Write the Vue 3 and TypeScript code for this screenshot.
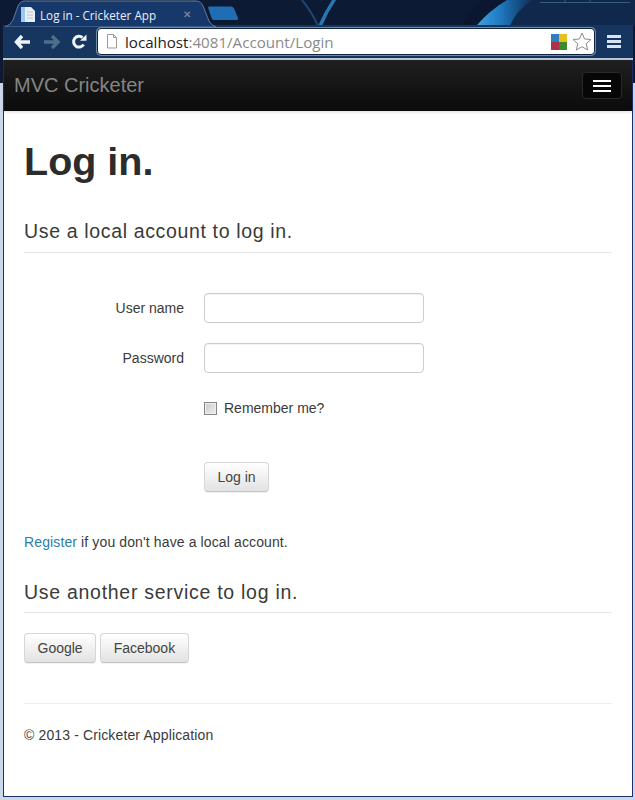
<script setup lang="ts">
const tabTitle: string = 'Log in - Cricketer App'
</script>

<template>
  <div class="window">
    <svg class="wallpaper" width="635" height="26" viewBox="0 0 635 26" aria-hidden="true">
      <defs>
        <linearGradient id="glow" x1="0" y1="0" x2="1" y2="0">
          <stop offset="0" stop-color="#3fa3e0" />
          <stop offset=".45" stop-color="#1e78bd" />
          <stop offset="1" stop-color="#0f2c57" />
        </linearGradient>
      </defs>
      <path d="M520 0 H635 V26 H500 Z" fill="#11284d" />
      <path d="M476 26 Q490 10 507 0 H532 Q515 12 510 26 Z" fill="url(#glow)" />
      <path d="M460 26 Q472 10 482 0 H506 Q488 10 476 26 Z" fill="#0b1730" />
      <path d="M322 26 Q328 12 336 0 L332 0 Q324 12 318 26 Z" fill="#2a76b3" />
      <path d="M302 0 Q312 12 318 26" stroke="#1b4675" stroke-width="2" fill="none" />
      <path d="M540 2.5 H630 M565 0 V2.5 M590 0 V2.5" stroke="#3a5a82" stroke-width="1" fill="none" />
    </svg>
    <div class="tabstrip">
      <div class="tab">
        <svg class="tab-shape" width="216" height="27" viewBox="0 0 216 27" aria-hidden="true">
          <path d="M0 27 Q6 25 8 20 L13 6 Q15 1 20 1 H191 Q196 1 198 6 L204 21 Q206 25 211 27 Z" fill="#17386a" stroke="#5f7b9d" />
        </svg>
        <svg class="tab-icon" width="16" height="17" viewBox="0 0 16 17" aria-hidden="true">
          <path d="M1 1 H11 L15 5 V16 H1 Z" fill="#e8eef5" />
          <path d="M1 1 H5 V16 H1 Z" fill="#9cc8ea" />
          <path d="M7 6 H13 M7 9 H13 M7 12 H13" stroke="#c2c6cc" />
        </svg>
        <span class="tab-title">{{ tabTitle }}</span>
        <span class="tab-close">✕</span>
      </div>
      <svg class="new-tab" width="32" height="15" viewBox="0 0 32 15" aria-hidden="true">
        <path d="M1 1.5 Q1 .5 3 .5 H24 Q26 .5 27 2.5 L31 12 Q31.500 14 29 14 H7 Q5 14 4.500 12 Z" fill="#1f6db5" />
      </svg>
    </div>
    <div class="toolbar">
      <svg class="tool" width="17" height="16" viewBox="0 0 17 16" aria-hidden="true">
        <path d="M8 2 L2.500 8 L8 14 M3 8 H16" stroke="#eef3f8" stroke-width="3.4" fill="none" />
      </svg>
      <svg class="tool" width="18" height="16" viewBox="0 0 18 16" aria-hidden="true">
        <path d="M10 2 L16 8 L10 14 M15 8 H2" stroke="#4d6e8c" stroke-width="3.4" fill="none" />
      </svg>
      <svg class="tool" width="16" height="16" viewBox="0 0 16 16" aria-hidden="true">
        <path d="M12.600 10.500 A5.400 5.400 0 1 1 11.500 3.600" stroke="#eef3f8" stroke-width="3" fill="none" />
        <path d="M9 6.800 H15.500 V.500 Z" fill="#eef3f8" />
      </svg>
      <div class="omnibox">
        <svg width="12" height="15" viewBox="0 0 12 15" aria-hidden="true">
          <path d="M1.500 .5 H7.500 L10.500 3.500 V14 H1.500 Z M7.500 .5 V3.500 H10.500" fill="#fff" stroke="#9a9a9a" />
        </svg>
        <span class="url"><span class="host">localhost</span>:4081/Account/Login</span>
        <span class="omni-right">
          <span class="ext">
            <i class="c1"></i><i class="c2"></i><i class="c3"></i><i class="c4"></i>
          </span>
          <svg width="20" height="19" viewBox="0 0 20 19" aria-hidden="true">
            <path d="M10 1 L12.600 7 L19 7.500 L14.200 11.700 L15.700 18 L10 14.700 L4.300 18 L5.800 11.700 L1 7.500 L7.400 7 Z" fill="#fff" stroke="#8a8a8a" />
          </svg>
        </span>
      </div>
      <span class="chrome-menu"><i></i><i></i><i></i></span>
    </div>
    <div class="page">
      <nav class="navbar">
        <span class="brand">MVC Cricketer</span>
        <span class="toggle"><i></i><i></i><i></i></span>
      </nav>
      <main class="content">
        <h1>Log in.</h1>
        <h2 class="section first">Use a local account to log in.</h2>
        <form class="form" @submit.prevent>
          <div class="row">
            <label class="label" for="user">User name</label>
            <input id="user" class="input" type="text" />
          </div>
          <div class="row">
            <label class="label" for="pass">Password</label>
            <input id="pass" class="input" type="password" />
          </div>
          <div class="row check-row">
            <label class="check">
              <span class="box"></span>
              <span>Remember me?</span>
            </label>
          </div>
          <div class="row submit-row">
            <button class="btn" type="submit">Log in</button>
          </div>
        </form>
        <p class="register"><a href="#" class="link">Register</a> if you don't have a local account.</p>
        <h2 class="section second">Use another service to log in.</h2>
        <div class="providers">
          <button class="btn provider" type="button">Google</button>
          <button class="btn provider" type="button">Facebook</button>
        </div>
        <footer class="footer">© 2013 - Cricketer Application</footer>
      </main>
    </div>
  </div>
</template>

<style>
html, body { margin: 0; background: #c6d6e8; }
</style>

<style scoped>
.window {
  position: relative;
  width: 635px;
  height: 800px;
  box-sizing: border-box;
  padding: 0 2px 3px 3px;
  overflow: hidden;
  background: linear-gradient(#0d1a33 0, #0d1a33 83px, #c9d8ea 83px);
  font-family: "Liberation Sans", Arial, sans-serif;
  display: flex;
  flex-direction: column;
}
.wallpaper { position: absolute; left: 0; top: 0; }
.tabstrip {
  position: relative;
  height: 25px;
  display: flex;
  align-items: flex-start;
  flex: none;
  z-index: 1;
}
.tab {
  position: relative;
  width: 204px;
  height: 25px;
  box-sizing: border-box;
  padding: 4px 0 0 17px;
  display: flex;
  align-items: center;
  align-self: flex-start;
  gap: 4px;
}
.tab-shape { position: absolute; left: 2px; top: 0; }
.tab-icon, .tab-title, .tab-close { position: relative; }
.tab-title {
  flex: 1;
  color: #e9eff6;
  font: 11.7px "Open Sans", "Liberation Sans", sans-serif;
  white-space: nowrap;
}
.tab-close { color: #6f8098; font-size: 10px; font-weight: 700; margin-right: 16px; }
.new-tab { margin: 6px 0 0 0; }
.toolbar {
  position: relative;
  height: 35px;
  box-sizing: border-box;
  flex: none;
  display: flex;
  align-items: center;
  padding: 0 0 0 11px;
  background: #16355f;
  border-bottom: 2px solid #b9c6d6;
}
.tool { flex: none; margin-right: 11px; }
.omnibox {
  flex: none;
  width: 498px;
  height: 27px;
  margin-left: -1px;
  box-sizing: border-box;
  display: flex;
  align-items: center;
  gap: 7px;
  padding: 0 0 0 8px;
  background: #fff;
  border: 1px solid #0d2340;
  border-radius: 4px;
  box-shadow: 0 0 0 1px #6f8cab;
}
.url { color: #8a8a8a; font: 15.15px "Open Sans", "Liberation Sans", sans-serif; white-space: nowrap; }
.host { color: #222; }
.omni-right { margin-left: auto; display: flex; align-items: center; gap: 5px; padding-right: 2px; }
.ext { width: 16px; height: 16px; display: grid; grid-template-columns: 1fr 1fr; grid-template-rows: 1fr 1fr; }
.ext i { display: block; }
.c1 { background: #2f7fc0; }
.c2 { background: #e6c01c; }
.c3 { background: #b0304c; }
.c4 { background: #3c8a2c; }
.chrome-menu { display: flex; flex-direction: column; gap: 2px; margin-left: 12px; }
.chrome-menu i { display: block; width: 14px; height: 3px; background: #d8e4f2; }
.page {
  flex: 1;
  min-height: 0;
  width: 630px;
  box-sizing: border-box;
  background: #fff;
  border-left: 1px solid #1c2f66;
  border-right: 1px solid #1c2f66;
  border-bottom: 1px solid #1c2f66;
  display: flex;
  flex-direction: column;
}
.navbar {
  height: 51px;
  flex: none;
  box-sizing: border-box;
  display: flex;
  align-items: center;
  justify-content: space-between;
  padding: 0 10px;
  background: linear-gradient(#1f1f1f, #0b0b0b);
  box-shadow: 0 1px 3px rgba(0, 0, 0, .15);
}
.brand { color: #858585; font-size: 20px; }
.toggle {
  width: 40px;
  height: 27px;
  box-sizing: border-box;
  display: flex;
  flex-direction: column;
  justify-content: center;
  align-items: center;
  gap: 3px;
  background: #070707;
  border: 1px solid #2a2a2a;
  border-radius: 4px;
}
.toggle i { display: block; width: 18px; height: 2px; background: #fff; }
.content {
  flex: 1;
  padding: 0 20px;
  color: #3a3a3a;
  font-size: 14px;
  line-height: 20px;
}
h1 {
  margin: 29px 0 0;
  font-size: 39.5px;
  line-height: 42px;
  font-weight: 700;
  color: #2c2c2c;
}
.section {
  margin: 0;
  padding-bottom: 9px;
  border-bottom: 1px solid #e6e6e6;
  font-size: 19.5px;
  letter-spacing: .65px;
  line-height: 22px;
  font-weight: 400;
}
.section.first { margin-top: 38px; padding-bottom: 10px; }
.section.second { margin-top: 29px; letter-spacing: .72px; }
.form { margin-top: 40px; }
.row {
  display: flex;
  align-items: center;
  gap: 20px;
  height: 30px;
  margin-bottom: 20px;
  padding-left: 180px;
}
.row .label { margin-left: -180px; width: 160px; text-align: right; }
.input {
  width: 220px;
  height: 30px;
  box-sizing: border-box;
  border: 1px solid #ccc;
  border-radius: 4px;
  background: #fff;
  box-shadow: inset 0 1px 1px rgba(0, 0, 0, .05);
}
.check { display: flex; align-items: center; gap: 7px; }
.box {
  width: 13px;
  height: 13px;
  box-sizing: border-box;
  border: 1px solid #858585;
  background: linear-gradient(135deg, #c8c8c8, #eeeeee);
  box-shadow: inset 0 0 0 1px #f0f0f0;
}
.submit-row { margin: 0; }
.check-row { margin-bottom: 39px; }
.btn {
  height: 30px;
  box-sizing: border-box;
  padding: 0 12.5px;
  color: #444;
  font: 14px "Liberation Sans", Arial, sans-serif;
  background: linear-gradient(#fff, #e2e2e2);
  border: 1px solid #d6d6d6;
  border-bottom-color: #c4c4c4;
  border-radius: 4px;
  box-shadow: 0 1px 1px rgba(0, 0, 0, .06);
}
.register { margin: 40px 0 0; letter-spacing: .12px; }
.link { color: #2a7ea8; text-decoration: none; }
.providers { display: flex; gap: 4px; margin-top: 20px; }
.footer {
  margin-top: 40px;
  padding-top: 21px;
  border-top: 1px solid #eee;
  letter-spacing: .13px;
}
</style>
